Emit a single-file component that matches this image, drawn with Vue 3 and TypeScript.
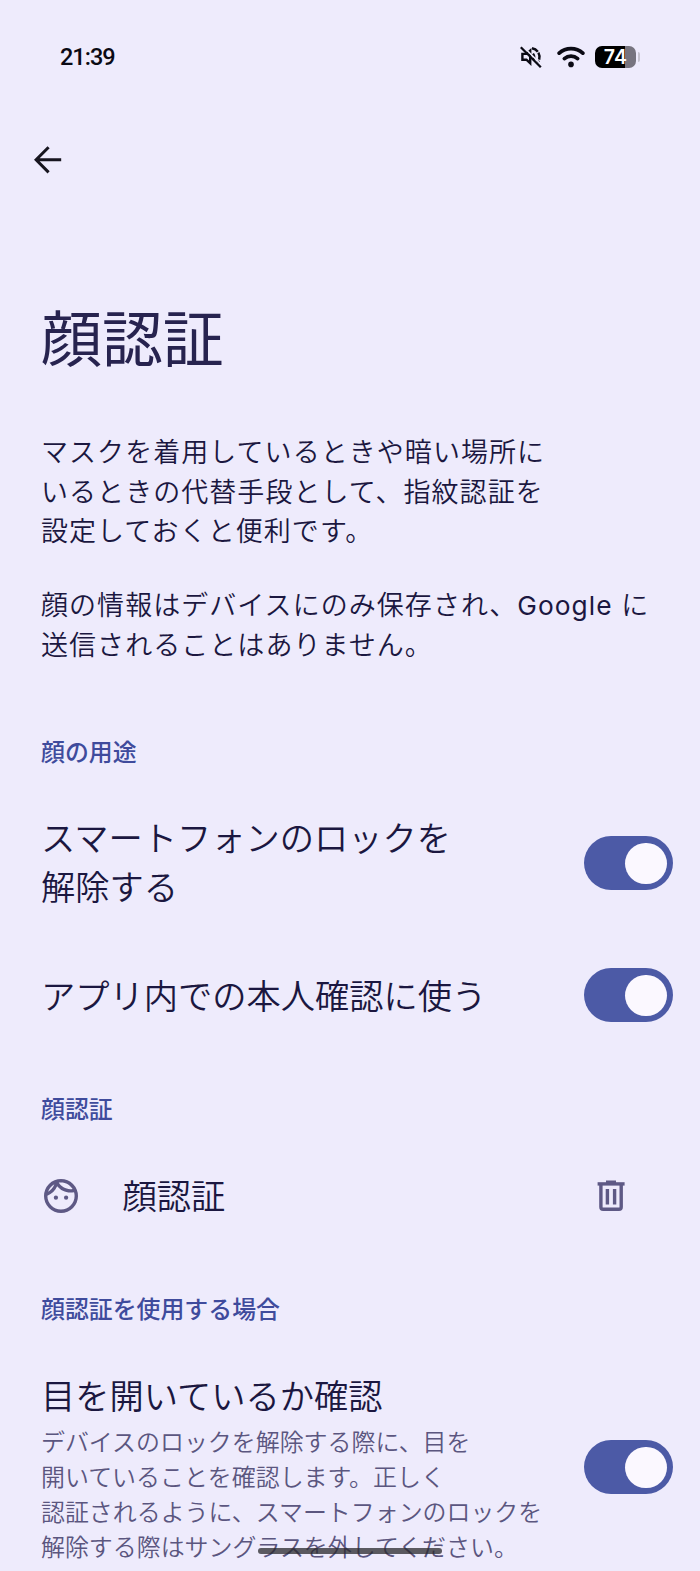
<script setup lang="ts">
import { ref } from 'vue'

interface Toggle {
  id: string
  lines: string[]
  on: boolean
}

const intro: string[] = [
  'マスクを着用しているときや暗い場所に',
  'いるときの代替手段として、指紋認証を',
  '設定しておくと便利です。',
]

const uses = ref<Toggle[]>([
  { id: 'unlock', lines: ['スマートフォンのロックを', '解除する'], on: true },
  { id: 'apps', lines: ['アプリ内での本人確認に使う'], on: true },
])

const eyesOpen = ref<boolean>(true)
const eyesDescription: string[] = [
  'デバイスのロックを解除する際に、目を',
  '開いていることを確認します。正しく',
  '認証されるように、スマートフォンのロックを',
  '解除する際はサングラスを外してください。',
]
</script>

<template>
  <main class="screen">
    <header class="status">
      <span class="time">21:39</span>
      <div class="indicators">
        <svg class="mute" viewBox="0 0 22 22" fill="none" stroke="#0b0a14" stroke-width="2.4">
          <path d="M2.4 7.9H6.4L10.2 4.6V17.2L6.4 13.7H2.4Z" />
          <path d="M13 7.6Q15.4 10.8 13 14" />
          <path d="M12 2.2A9 9 0 0 1 17.8 16.4" stroke-dasharray="7 1" />
          <path d="M2 -0.6L22.8 20.2" stroke="#eeebfc" stroke-width="1.6" />
          <path d="M0.8 1.2L20.8 21.2" stroke-width="2.3" />
        </svg>
        <svg class="wifi" viewBox="0 0 28 22" fill="none" stroke="#0b0a14" stroke-width="3.8" stroke-linecap="round">
          <path d="M2.2 7.1C8.8 1.1 19.2 1.1 25.8 7.1" />
          <path d="M7.4 12.6C11.2 9.4 16.8 9.4 20.6 12.6" />
          <circle cx="14" cy="18.4" r="2.8" fill="#0b0a14" stroke="none" />
        </svg>
        <div class="battery"><span>74</span></div>
        <i class="nub"></i>
      </div>
    </header>

    <nav class="toolbar">
      <button class="back" type="button" aria-label="戻る">
        <svg viewBox="0 0 28 28" fill="none" stroke="#17151f" stroke-width="3">
          <path d="M14.6 1.2L2.1 13.8L14.6 26.4M2 13.8H27.2" />
        </svg>
      </button>
    </nav>

    <h1>顔認証</h1>

    <section class="intro">
      <p><span v-for="line in intro" :key="line" class="line">{{ line }}</span></p>
      <p>
        <span class="line">顔の情報はデバイスにのみ保存され、<span class="latin">Google</span> に</span>
        <span class="line">送信されることはありません。</span>
      </p>
    </section>

    <h2>顔の用途</h2>
    <div v-for="item in uses" :key="item.id" class="row">
      <div class="text">
        <span v-for="line in item.lines" :key="line" class="line name">{{ line }}</span>
      </div>
      <button class="switch" :class="{ on: item.on }" type="button" role="switch" :aria-checked="item.on" @click="item.on = !item.on"><i></i></button>
    </div>

    <h2 class="enrolled">顔認証</h2>
    <div class="face-row">
      <svg class="face" viewBox="2 2 20 20" fill="#5e5985">
        <path fill-rule="evenodd" d="M12 2a10 10 0 1 0 0 20a10 10 0 1 0 0-20zM10.66 4.12C12.06 6.44 14.6 8 17.5 8c.46 0 .91-.05 1.34-.12C17.44 5.56 14.9 4 12 4c-.46 0-.91.05-1.34.12zM4.42 9.47c1.71-.97 3.03-2.55 3.66-4.44C6.37 6 5.05 7.58 4.42 9.47zM12 20c-4.41 0-8-3.59-8-8 0-.05.01-.1 0-.14 2.6-.98 4.69-2.99 5.74-5.55C11.58 8.56 14.37 10 17.5 10c.75 0 1.47-.09 2.17-.24.21.71.33 1.46.33 2.24 0 4.41-3.59 8-8 8z" />
        <circle cx="9" cy="13" r="1.25" />
        <circle cx="15" cy="13" r="1.25" />
      </svg>
      <span class="name">顔認証</span>
      <svg class="trash" viewBox="0 0 28 32" fill="none" stroke="#5e5985" stroke-width="3.4">
        <path d="M0.6 3.9H27.6" />
        <path d="M9 1.9H19" stroke-width="2.8" />
        <path d="M3.9 4V27Q3.9 29.2 6.1 29.2H22Q24.2 29.2 24.2 27V4" />
        <path d="M10.4 9V24.4M17.6 9V24.4" />
      </svg>
    </div>

    <h2 class="when">顔認証を使用する場合</h2>
    <div class="row detail">
      <div class="text">
        <span class="line name">目を開いているか確認</span>
        <div class="description">
          <span v-for="line in eyesDescription" :key="line" class="line">{{ line }}</span>
        </div>
      </div>
      <button class="switch" :class="{ on: eyesOpen }" type="button" role="switch" :aria-checked="eyesOpen" @click="eyesOpen = !eyesOpen"><i></i></button>
    </div>

    <div class="home-bar"></div>
  </main>
</template>

<style>
html,
body {
  background: #eeebfc;
}
</style>

<style scoped>
.screen {
  position: relative;
  box-sizing: border-box;
  width: 700px;
  height: 1571px;
  overflow: hidden;
  background: #eeebfc;
  color: #1b1740;
  font-family: 'Noto Sans CJK JP', 'Noto Sans', sans-serif;
  font-weight: 350;
  display: flex;
  flex-direction: column;
}
.screen > * {
  flex-shrink: 0;
}
h1,
h2,
p {
  margin: 0;
}
button {
  border: 0;
  padding: 0;
  background: none;
}
.line {
  display: block;
  white-space: nowrap;
}
.status {
  height: 114px;
  padding: 0 60px;
  display: flex;
  align-items: center;
  justify-content: space-between;
}
.time {
  font: 500 23.5px/28px Roboto, sans-serif;
  letter-spacing: -1px;
  color: #0b0a14;
}
.indicators {
  display: flex;
  align-items: center;
}
.mute {
  width: 22px;
  height: 22px;
  margin-right: 15px;
}
.wifi {
  width: 28px;
  height: 22px;
  margin-right: 10px;
}
.battery {
  width: 41px;
  height: 22px;
  border-radius: 7px;
  background: linear-gradient(90deg, #000 30px, #77747f 30px);
  color: #fff;
  font: 600 19.5px/22px Inter, sans-serif;
  text-align: center;
  letter-spacing: 0.3px;
}
.nub {
  width: 2.5px;
  height: 10px;
  margin-left: 1.5px;
  border-radius: 0 2px 2px 0;
  background: #c6c3d0;
}
.toolbar {
  height: 92px;
  padding-left: 34px;
  display: flex;
  align-items: center;
}
.back,
.back svg {
  display: block;
  width: 28px;
  height: 28px;
}
h1 {
  margin: 89px 0 0 41px;
  font-size: 60.9px;
  font-weight: 400;
  line-height: 81px;
  color: #27234f;
}
.intro {
  margin: 55px 0 70px 41px;
  display: flex;
  flex-direction: column;
  gap: 34.4px;
  font-size: 27px;
  line-height: 39.6px;
  letter-spacing: 1.05px;
}
.latin {
  margin-right: 1.5px;
  font-family: Inter, sans-serif;
  font-size: 26.3px;
  font-weight: 400;
  line-height: 1;
}
h2 {
  margin-left: 41px;
  font-size: 23.9px;
  font-weight: 500;
  line-height: 35px;
  color: #3f4b9c;
}
.row {
  height: 132px;
  padding: 0 27px 0 41px;
  display: flex;
  align-items: center;
  justify-content: space-between;
}
h2 + .row {
  margin-top: 29px;
}
.text {
  padding-bottom: 4px;
}
.row + .row .text {
  padding-bottom: 2px;
}
.name {
  font-size: 34.25px;
  line-height: 49.2px;
}
.description {
  margin-top: 4.5px;
  font-size: 23.95px;
  line-height: 34.9px;
  color: #5b567f;
}
.switch {
  width: 89px;
  height: 54px;
  border-radius: 27px;
  background: #c9c5dc;
  display: flex;
  align-items: center;
  padding: 0 6.5px;
}
.switch.on {
  background: #4c5aa6;
  justify-content: flex-end;
}
.switch i {
  width: 41.4px;
  height: 41.4px;
  border-radius: 50%;
  background: #fbf8ff;
}
.enrolled {
  margin-top: 29px;
}
.face-row {
  height: 72px;
  margin-top: 35px;
  padding: 0 75px 0 44px;
  display: flex;
  align-items: center;
}
.face {
  width: 34px;
  height: 34px;
  margin-right: 44.5px;
}
.face-row .name {
  padding-bottom: 4px;
}
.trash {
  width: 28px;
  height: 32px;
  margin-left: auto;
}
.when {
  margin-top: 58px;
}
h2 + .detail {
  height: 193px;
  margin-top: 45.5px;
}
.detail .text {
  padding-bottom: 1px;
}
.home-bar {
  position: absolute;
  left: 258px;
  top: 1547.5px;
  width: 184px;
  height: 6px;
  border-radius: 3px;
  background: rgba(40, 40, 44, 0.75);
}
</style>
